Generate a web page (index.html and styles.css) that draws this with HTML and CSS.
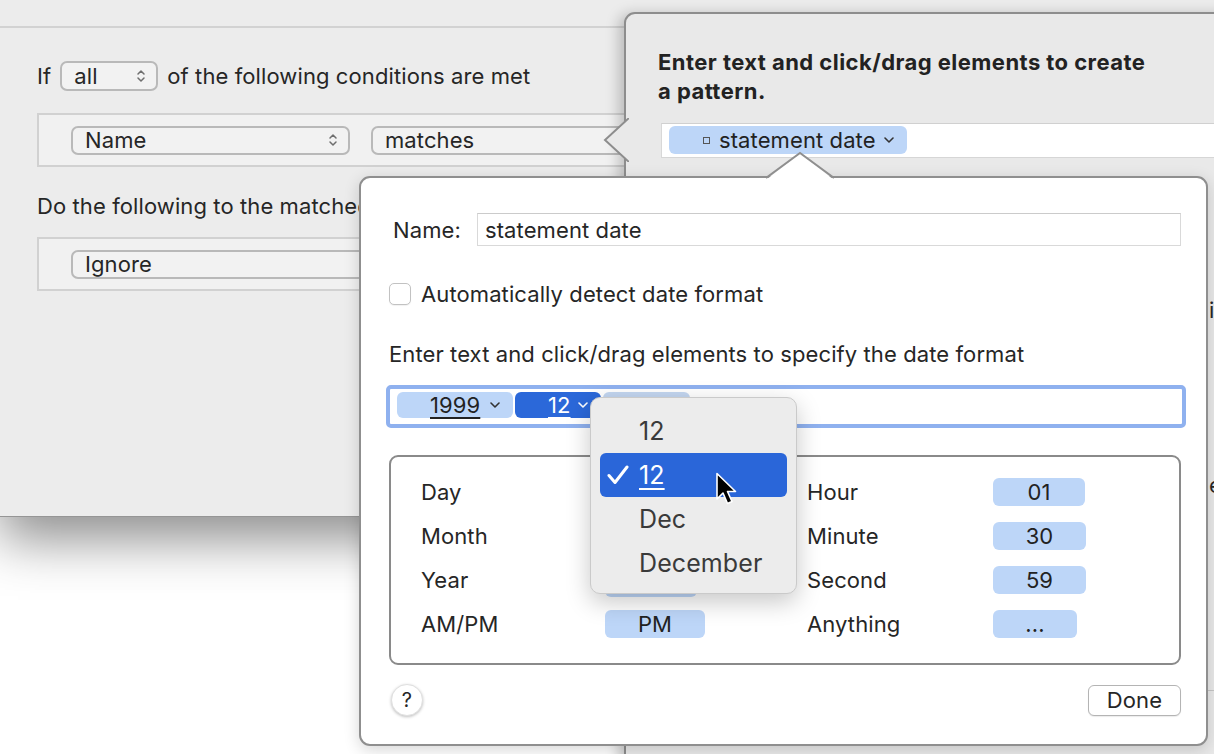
FILE: index.html
```html
<!DOCTYPE html>
<html lang="en">
<head>
<meta charset="utf-8">
<title>Date pattern</title>
<link rel="stylesheet" href="styles.css">
</head>
<body>
<div class="screen">

  <div class="backwin">
    <div class="toolbar"></div>
    <div class="bw-content">
      <div class="cond-line">
        <span>If</span>
        <div class="popup popup-all"><span>all</span>
          <svg class="updown" width="10" height="16" viewBox="0 0 10 16"><path d="M2 6 L5 3 L8 6 M2 10 L5 13 L8 10" fill="none" stroke="#6e6e6e" stroke-width="1.5" stroke-linecap="round" stroke-linejoin="round"/></svg>
        </div>
        <span>of the following conditions are met</span>
      </div>
      <div class="rulebox">
        <div class="popup popup-name"><span>Name</span>
          <svg class="updown" width="10" height="16" viewBox="0 0 10 16"><path d="M2 6 L5 3 L8 6 M2 10 L5 13 L8 10" fill="none" stroke="#6e6e6e" stroke-width="1.5" stroke-linecap="round" stroke-linejoin="round"/></svg>
        </div>
        <div class="popup popup-matches"><span>matches</span></div>
      </div>
      <div class="do-line">Do the following to the matched files:</div>
      <div class="rulebox rulebox-2">
        <div class="popup popup-ignore"><span>Ignore</span></div>
      </div>
    </div>
  </div>

  <div class="pattern-pop">
    <svg class="pp-arrow" width="26" height="44" viewBox="0 0 26 44"><path d="M27 0 L2 22 L27 44 Z" fill="#e9e9e9"/><path d="M26 0 L2 22 L26 44" fill="none" stroke="#8d8d8d" stroke-width="2"/></svg>
    <div class="pp-title">Enter text and click/drag elements to create<br>a pattern.</div>
    <div class="pp-field">
      <div class="chip chip-token">
        <span class="tok-square"></span>
        <span>statement date</span>
        <svg class="chev" width="10" height="6" viewBox="0 0 10 6"><path d="M1 1 L5 5 L9 1" fill="none" stroke="#333" stroke-width="1.6" stroke-linecap="round" stroke-linejoin="round"/></svg>
      </div>
    </div>
    <div class="pp-rest">
      <div class="pp-frag frag-i">i</div>
      <div class="pp-frag frag-e">e</div>
      <div class="pp-sep"></div>
    </div>
  </div>

  <div class="date-pop">
    <svg class="dp-arrow" width="68" height="28" viewBox="0 0 68 28"><path d="M0 29 L34 2 L68 29 Z" fill="#fff"/><path d="M0 27 L34 2 L68 27" fill="none" stroke="#8f8f8f" stroke-width="2"/></svg>
    <div class="name-row">
      <div class="name-label">Name:</div>
      <div class="text-field">statement date</div>
    </div>
    <div class="check-row">
      <span class="checkbox"></span>
      <span>Automatically detect date format</span>
    </div>
    <div class="hint">Enter text and click/drag elements to specify the date format</div>
    <div class="token-field">
      <div class="chip chip-year"><span class="u">1999</span>
        <svg class="chev" width="10" height="6" viewBox="0 0 10 6"><path d="M1 1 L5 5 L9 1" fill="none" stroke="#333" stroke-width="1.6" stroke-linecap="round" stroke-linejoin="round"/></svg>
      </div>
      <div class="chip chip-month sel"><span class="u">12</span>
        <svg class="chev" width="10" height="6" viewBox="0 0 10 6"><path d="M1 1 L5 5 L9 1" fill="none" stroke="#fff" stroke-width="1.6" stroke-linecap="round" stroke-linejoin="round"/></svg>
      </div>
      <div class="chip chip-day"><span>01</span></div>
    </div>
    <div class="elements">
      <span class="el-label">Day</span><span class="chip el-chip w100"></span>
      <span class="el-label">Hour</span><span class="chip el-chip w92">01</span>
      <span class="el-label">Month</span><span class="chip el-chip w100"></span>
      <span class="el-label">Minute</span><span class="chip el-chip w93">30</span>
      <span class="el-label">Year</span><span class="chip el-chip w92 year-chip"></span>
      <span class="el-label">Second</span><span class="chip el-chip w93">59</span>
      <span class="el-label">AM/PM</span><span class="chip el-chip w100">PM</span>
      <span class="el-label">Anything</span><span class="chip el-chip w84">...</span>
    </div>
    <div class="bottom-row">
      <div class="help">?</div>
      <div class="done">Done</div>
    </div>
  </div>

  <div class="menu">
    <div class="menu-item">12</div>
    <div class="menu-item sel">
      <svg class="check" width="22" height="20" viewBox="0 0 22 20"><path d="M2 10.5 L8 17.5 L20 2" fill="none" stroke="#fff" stroke-width="3" stroke-linecap="round" stroke-linejoin="round"/></svg>
      <span class="u">12</span>
    </div>
    <div class="menu-item">Dec</div>
    <div class="menu-item">December</div>
  </div>

  <svg class="cursor" width="24" height="36" viewBox="0 0 24 36"><path d="M2 1.5 L2 27 L8 21 L12.5 31.5 L17 29.5 L12.5 19.5 L20.5 19.5 Z" fill="#000" stroke="#fff" stroke-width="1.6" stroke-linejoin="round"/></svg>

</div>
</body>
</html>
```

FILE: styles.css
```css
* { box-sizing: border-box; }
html, body { margin: 0; padding: 0; }
body {
  width: 1214px;
  height: 754px;
  overflow: hidden;
  background: #ffffff;
  font-family: Inter, "Noto Sans", "Liberation Sans", sans-serif;
  font-size: 22px;
  letter-spacing: 0.1px;
  color: #262626;
}
.screen { position: relative; width: 1214px; height: 754px; overflow: hidden; }

/* back window */
.backwin {
  position: absolute; left: 0; top: 0;
  width: 1214px; height: 517px;
  background: #ececec;
  border-bottom: 1px solid #959595;
  box-shadow: 0 22px 50px rgba(0,0,0,.45);
}
.toolbar { height: 28px; border-bottom: 2px solid #d2d2d2; }
.bw-content { padding: 33px 0 0 37px; }
.cond-line { display: flex; align-items: center; gap: 9px; height: 30px; }
.popup {
  display: flex; align-items: center; justify-content: space-between;
  height: 30px;
  border: 2px solid #b9b9b9;
  border-radius: 7px;
  background: #f2f2f2;
  padding: 0 10px 0 12px;
}
.popup-all { width: 98px; }
.rulebox {
  margin-top: 22px;
  width: 1200px; height: 54px;
  background: #f1f1f1;
  border: 2px solid #d1d1d1;
  display: flex; align-items: center; gap: 21px;
  padding-left: 32px;
}
.popup-name { width: 279px; height: 29px; }
.popup-matches { width: 300px; height: 29px; }
.popup-ignore { width: 320px; height: 29px; }
.do-line { margin-top: 24px; height: 30px; line-height: 30px; }
.rulebox-2 { margin-top: 16px; }

/* pattern popover */
.pattern-pop {
  position: absolute; left: 624px; top: 12px;
  width: 640px; height: 780px;
  background: #e9e9e9;
  border: 2px solid #8d8d8d;
  border-radius: 11px;
  box-shadow: -5px 2px 14px rgba(0,0,0,.22);
  padding: 34px 0 0 32px;
}
.pp-arrow { position: absolute; left: -23px; top: 104px; }
.pp-title {
  font-weight: 700; font-size: 22px; line-height: 29px;
  letter-spacing: 0.45px;
  white-space: nowrap; color: #222;
}
.pp-field {
  margin-top: 17px; margin-left: 3px;
  height: 35px;
  background: #fff;
  border-top: 1px solid #d0d0d0;
  border-left: 1px solid #d8d8d8;
  border-bottom: 1px solid #d6d6d6;
  padding: 2px 0 0 7px;
}
.chip {
  display: flex; align-items: center;
  background: #bdd6f8;
  border-radius: 6px;
  color: #222;
}
.chip-token { width: 238px; height: 28px; padding-left: 34px; gap: 8px; }
.tok-square { width: 7px; height: 7px; border: 1px solid #555; margin-right: 1px; }
.chev { flex: none; }
.pp-rest { padding-left: 551px; }
.pp-frag { height: 30px; line-height: 30px; }
.frag-i { margin-top: 137px; }
.frag-e { margin-top: 145px; }
.pp-sep { margin-top: 190px; margin-left: -600px; height: 1px; background: #c6c6c6; }

/* date popover */
.date-pop {
  position: absolute; left: 359px; top: 176px;
  width: 849px; height: 570px;
  background: #fff;
  border: 2px solid #8f8f8f;
  border-radius: 11px;
  box-shadow: 0 4px 16px rgba(0,0,0,.16);
  padding: 35px 25px 0 28px;
}
.dp-arrow { position: absolute; left: 405px; top: -27px; }
.name-row { display: flex; align-items: center; height: 33px; }
.name-label { width: 88px; padding-left: 4px; }
.text-field {
  flex: 1; height: 33px;
  border: 1px solid #d9d9d9; border-top-color: #cbcbcb;
  padding-left: 7px;
  display: flex; align-items: center;
}
.check-row { margin-top: 33px; height: 30px; display: flex; align-items: center; gap: 10px; }
.checkbox {
  width: 22px; height: 22px;
  border: 1px solid #c2c2c2; border-radius: 5px;
  background: #fff;
  box-shadow: 0 1px 1px rgba(0,0,0,.06);
}
.hint { margin-top: 30px; height: 30px; line-height: 30px; }
.token-field {
  margin-top: 16px; margin-left: -3px;
  width: 800px; height: 43px;
  border: 4px solid #8fb1ef;
  border-radius: 5px;
  padding: 3px 7px;
  display: flex; gap: 2px;
}
.token-field .chip { height: 26px; }
.chip-year { width: 116px; padding-left: 33px; gap: 10px; }
.chip-month { width: 86px; padding-left: 33px; gap: 7px; }
.chip-month.sel { background: #2b68d9; color: #fff; }
.chip-day { width: 87px; justify-content: center; background: #c3d6f0; }
.u { text-decoration: underline; text-underline-offset: 4px; text-decoration-thickness: 2px; }

.elements {
  margin-top: 27px;
  width: 792px; height: 210px;
  border: 2px solid #8a8a8a;
  border-radius: 9px;
  padding: 13px 0 0 30px;
  display: grid;
  grid-template-columns: 184px 202px 186px 1fr;
  grid-auto-rows: 44px;
  align-items: center;
}
.el-chip { height: 28px; justify-content: center; }
.year-chip { margin-top: 6px; }
.w100 { width: 100px; }
.w92 { width: 92px; }
.w93 { width: 93px; }
.w84 { width: 84px; }

.bottom-row { margin-top: 19px; display: flex; align-items: center; justify-content: space-between; }
.help {
  margin-left: 2px;
  width: 32px; height: 32px; border-radius: 50%;
  background: #fff;
  border: 1px solid #e0e0e0;
  box-shadow: 0 1px 3px rgba(0,0,0,.25);
  display: flex; align-items: center; justify-content: center;
  font-size: 20px;
}
.done {
  width: 93px; height: 31px;
  border: 1.5px solid #b4b4b4; border-radius: 6px;
  background: #fff;
  box-shadow: 0 1px 1px rgba(0,0,0,.08);
  display: flex; align-items: center; justify-content: center;
}

/* popup menu */
.menu {
  position: absolute; left: 590px; top: 397px;
  width: 207px; height: 197px;
  background: #ececec;
  border: 1px solid #cacaca;
  border-radius: 10px;
  box-shadow: 0 8px 24px rgba(0,0,0,.22);
  padding: 11px 9px 0 9px;
}
.menu-item {
  position: relative;
  height: 44px;
  display: flex; align-items: center;
  padding-left: 39px;
  font-size: 25px;
  color: #3a3a3a;
  border-radius: 6px;
}
.menu-item.sel { background: #2a66d9; color: #fff; }
.menu-item .check { position: absolute; left: 7px; top: 12px; }

.cursor { position: absolute; left: 715px; top: 472px; }
```
